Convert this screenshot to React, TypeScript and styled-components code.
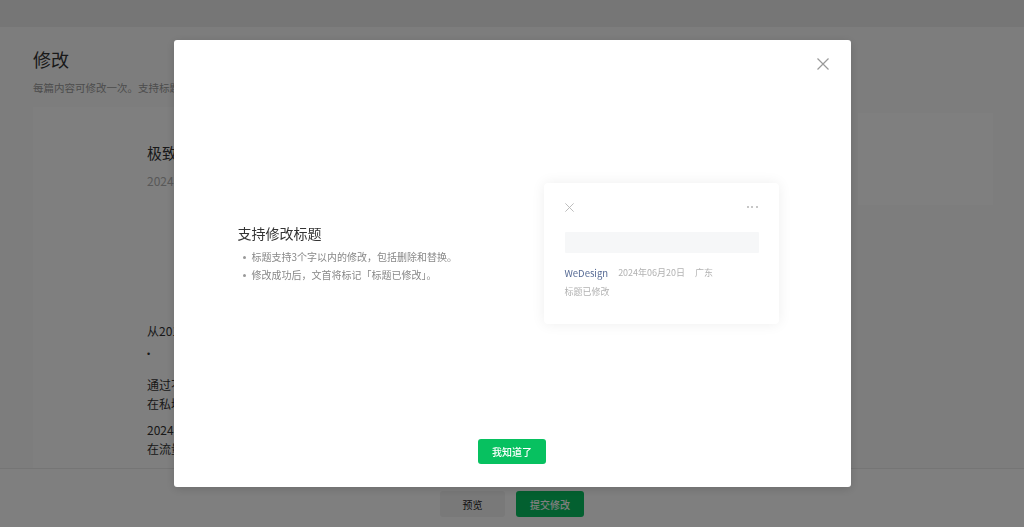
import React from "react";
import styled, { createGlobalStyle } from "styled-components";

const GlobalStyle = createGlobalStyle`
  html, body { margin: 0; padding: 0; }
  body {
    font-family: "Noto Sans CJK SC", "Noto Sans", sans-serif;
    background: #fafafa;
    overflow: hidden;
  }
  * { box-sizing: border-box; }
`;

const Page = styled.div`
  height: 100vh;
  display: flex;
  flex-direction: column;
  background: #fafafa;
`;

const TopBar = styled.div`
  height: 27px;
  flex: none;
  background: #ececec;
`;

const Main = styled.main`
  flex: 1;
  min-height: 0;
  display: flex;
  flex-direction: column;
  padding: 0 31px 0 33px;
`;

const PageTitle = styled.h1`
  margin: 19px 0 0;
  font-size: 18px;
  line-height: 26px;
  font-weight: 400;
  color: #333;
`;

const PageDesc = styled.p`
  margin: 8px 0 0;
  font-size: 10.5px;
  line-height: 16px;
  color: #999;
  white-space: nowrap;
`;

const ContentRow = styled.div`
  flex: 1;
  min-height: 0;
  display: flex;
  gap: 13px;
  margin-top: 11px;
  align-items: flex-start;
`;

const ArticleCard = styled.section`
  flex: 1;
  align-self: stretch;
  background: #fefefe;
  overflow: hidden;
  padding: 35px 0 0 114px;
  color: #333;
`;

const ArticleTitle = styled.h2`
  margin: 0;
  font-size: 15px;
  line-height: 22px;
  font-weight: 400;
  white-space: nowrap;
`;

const ArticleMeta = styled.div`
  margin-top: 8px;
  font-size: 12px;
  line-height: 18px;
  color: #b2b2b2;
  white-space: nowrap;
`;

const Cover = styled.div`
  width: 200px;
  height: 110px;
  margin: 10px 0 11px 60px;
  background: #fefefe;
`;

const Para = styled.p<{ $gap?: number }>`
  margin: ${(p) => p.$gap ?? 0}px 0 0;
  font-size: 12px;
  line-height: 19px;
  color: #333;
  white-space: nowrap;
`;

const Dot = styled.div`
  margin-top: 5px;
  font-family: "Liberation Sans", sans-serif;
  font-size: 9px;
  line-height: 19px;
  color: #333;
`;

const SidePanel = styled.aside`
  width: 135px;
  height: 92px;
  margin-top: 6px;
  background: #fff;
`;

const Footer = styled.footer`
  flex: none;
  height: 59px;
  background: #fff;
  border-top: 1px solid #eaeaea;
  display: flex;
  justify-content: center;
  align-items: flex-start;
  gap: 11px;
  padding-top: 22px;
`;

const Button = styled.button<{ $primary?: boolean; $w: number }>`
  width: ${(p) => p.$w}px;
  height: 26px;
  border: none;
  border-radius: 3px;
  font-family: inherit;
  font-size: 10px;
  padding: 0;
  cursor: pointer;
  background: ${(p) => (p.$primary ? "#07c160" : "#f2f2f2")};
  color: ${(p) => (p.$primary ? "#fff" : "#222")};
  font-weight: ${(p) => (p.$primary ? 500 : 400)};
`;

const Overlay = styled.div`
  position: fixed;
  inset: 0;
  background: rgba(0, 0, 0, 0.5);
  display: flex;
  align-items: center;
  justify-content: center;
`;

const Modal = styled.div`
  position: relative;
  width: 677px;
  height: 447px;
  background: #fff;
  border-radius: 3px;
  box-shadow: 0 2px 10px rgba(0, 0, 0, 0.15);
  display: flex;
  flex-direction: column;
`;

const CloseBtn = styled.button`
  position: absolute;
  top: 16px;
  right: 20px;
  width: 16px;
  height: 16px;
  padding: 0;
  border: none;
  background: none;
  display: flex;
  align-items: center;
  justify-content: center;
  cursor: pointer;
`;

const ModalBody = styled.div`
  flex: 1;
  display: flex;
  align-items: center;
  justify-content: space-between;
  padding: 28px 72px 0 64px;
`;

const Intro = styled.div`
  display: flex;
  flex-direction: column;
`;

const IntroTitle = styled.h3`
  margin: 0;
  font-size: 14px;
  line-height: 20px;
  font-weight: 400;
  color: #333;
`;

const IntroList = styled.ul`
  margin: 5px 0 0;
  padding: 0;
  list-style: none;
`;

const IntroItem = styled.li`
  position: relative;
  padding-left: 14px;
  font-size: 10px;
  line-height: 18px;
  color: #888;
  &::before {
    content: "";
    position: absolute;
    left: 5px;
    top: 7.5px;
    width: 3px;
    height: 3px;
    border-radius: 50%;
    background: #999;
  }
`;

const PreviewCard = styled.div`
  width: 235px;
  height: 141px;
  background: #fff;
  border-radius: 4px;
  box-shadow: 0 0 14px rgba(0, 0, 0, 0.07);
  padding: 19px 20px 0 21px;
  display: flex;
  flex-direction: column;
`;

const CardTop = styled.div`
  height: 10px;
  display: flex;
  align-items: center;
  justify-content: space-between;
`;

const Dots = styled.div`
  display: flex;
  gap: 2.5px;
  margin-right: 1px;
`;

const DotItem = styled.span`
  width: 2px;
  height: 2px;
  border-radius: 50%;
  background: #b5b5b5;
`;

const TitleBar = styled.div`
  height: 21px;
  margin-top: 20px;
  background: #f6f7f8;
  border-radius: 1px;
`;

const CardMeta = styled.div`
  margin-top: 12px;
  display: flex;
  gap: 10px;
  font-size: 9px;
  line-height: 16px;
  white-space: nowrap;
`;

const MetaText = styled.span<{ $link?: boolean }>`
  color: ${(p) => (p.$link ? "#576b95" : "#b2b2b2")};
  font-size: ${(p) => (p.$link ? "9.5px" : "9px")};
`;

const ModifiedTag = styled.div`
  margin-top: 3px;
  font-size: 9px;
  line-height: 16px;
  color: #b2b2b2;
`;

const ModalFooter = styled.div`
  flex: none;
  display: flex;
  justify-content: center;
  padding: 0 0 23px;
`;

const GotIt = styled.button`
  width: 68px;
  height: 25px;
  border: none;
  border-radius: 3px;
  background: #07c160;
  color: #fff;
  font-family: inherit;
  font-size: 10px;
  font-weight: 500;
  padding: 0;
  cursor: pointer;
`;

const XIcon = ({ size, color, stroke }: { size: number; color: string; stroke: number }) => (
  <svg width={size} height={size} viewBox="0 0 12 12" fill="none">
    <path d="M0.5 0.5L11.5 11.5M11.5 0.5L0.5 11.5" stroke={color} strokeWidth={stroke} />
  </svg>
);

export default function App() {
  return (
    <>
      <GlobalStyle />
      <Page>
        <TopBar />
        <Main>
          <PageTitle>修改</PageTitle>
          <PageDesc>每篇内容可修改一次。支持标题和正文的修改，修改后的内容将在审核通过后生效。</PageDesc>
          <ContentRow>
            <ArticleCard>
              <ArticleTitle>极致体验，WeDesign 设计分享会回顾</ArticleTitle>
              <ArticleMeta>2024年06月20日 广东</ArticleMeta>
              <Cover />
              <Para>从2019年开始，我们一直在探索更好的设计方式。</Para>
              <Dot>•</Dot>
              <Para $gap={11}>通过不断的尝试与打磨，我们总结出一套设计方法，</Para>
              <Para>在私域与公域的场景中都得到了验证。</Para>
              <Para $gap={7}>2024年，我们将继续分享这些经验，</Para>
              <Para>在流量与体验之间找到更好的平衡。</Para>
            </ArticleCard>
            <SidePanel />
          </ContentRow>
        </Main>
        <Footer>
          <Button $w={65}>预览</Button>
          <Button $w={68} $primary>
            提交修改
          </Button>
        </Footer>
      </Page>
      <Overlay>
        <Modal>
          <CloseBtn aria-label="关闭">
            <XIcon size={12} color="#999" stroke={1.2} />
          </CloseBtn>
          <ModalBody>
            <Intro>
              <IntroTitle>支持修改标题</IntroTitle>
              <IntroList>
                <IntroItem>标题支持3个字以内的修改，包括删除和替换。</IntroItem>
                <IntroItem>修改成功后，文首将标记「标题已修改」。</IntroItem>
              </IntroList>
            </Intro>
            <PreviewCard>
              <CardTop>
                <XIcon size={9} color="#b5b5b5" stroke={1.2} />
                <Dots>
                  <DotItem />
                  <DotItem />
                  <DotItem />
                </Dots>
              </CardTop>
              <TitleBar />
              <CardMeta>
                <MetaText $link>WeDesign</MetaText>
                <MetaText>2024年06月20日</MetaText>
                <MetaText>广东</MetaText>
              </CardMeta>
              <ModifiedTag>标题已修改</ModifiedTag>
            </PreviewCard>
          </ModalBody>
          <ModalFooter>
            <GotIt>我知道了</GotIt>
          </ModalFooter>
        </Modal>
      </Overlay>
    </>
  );
}
